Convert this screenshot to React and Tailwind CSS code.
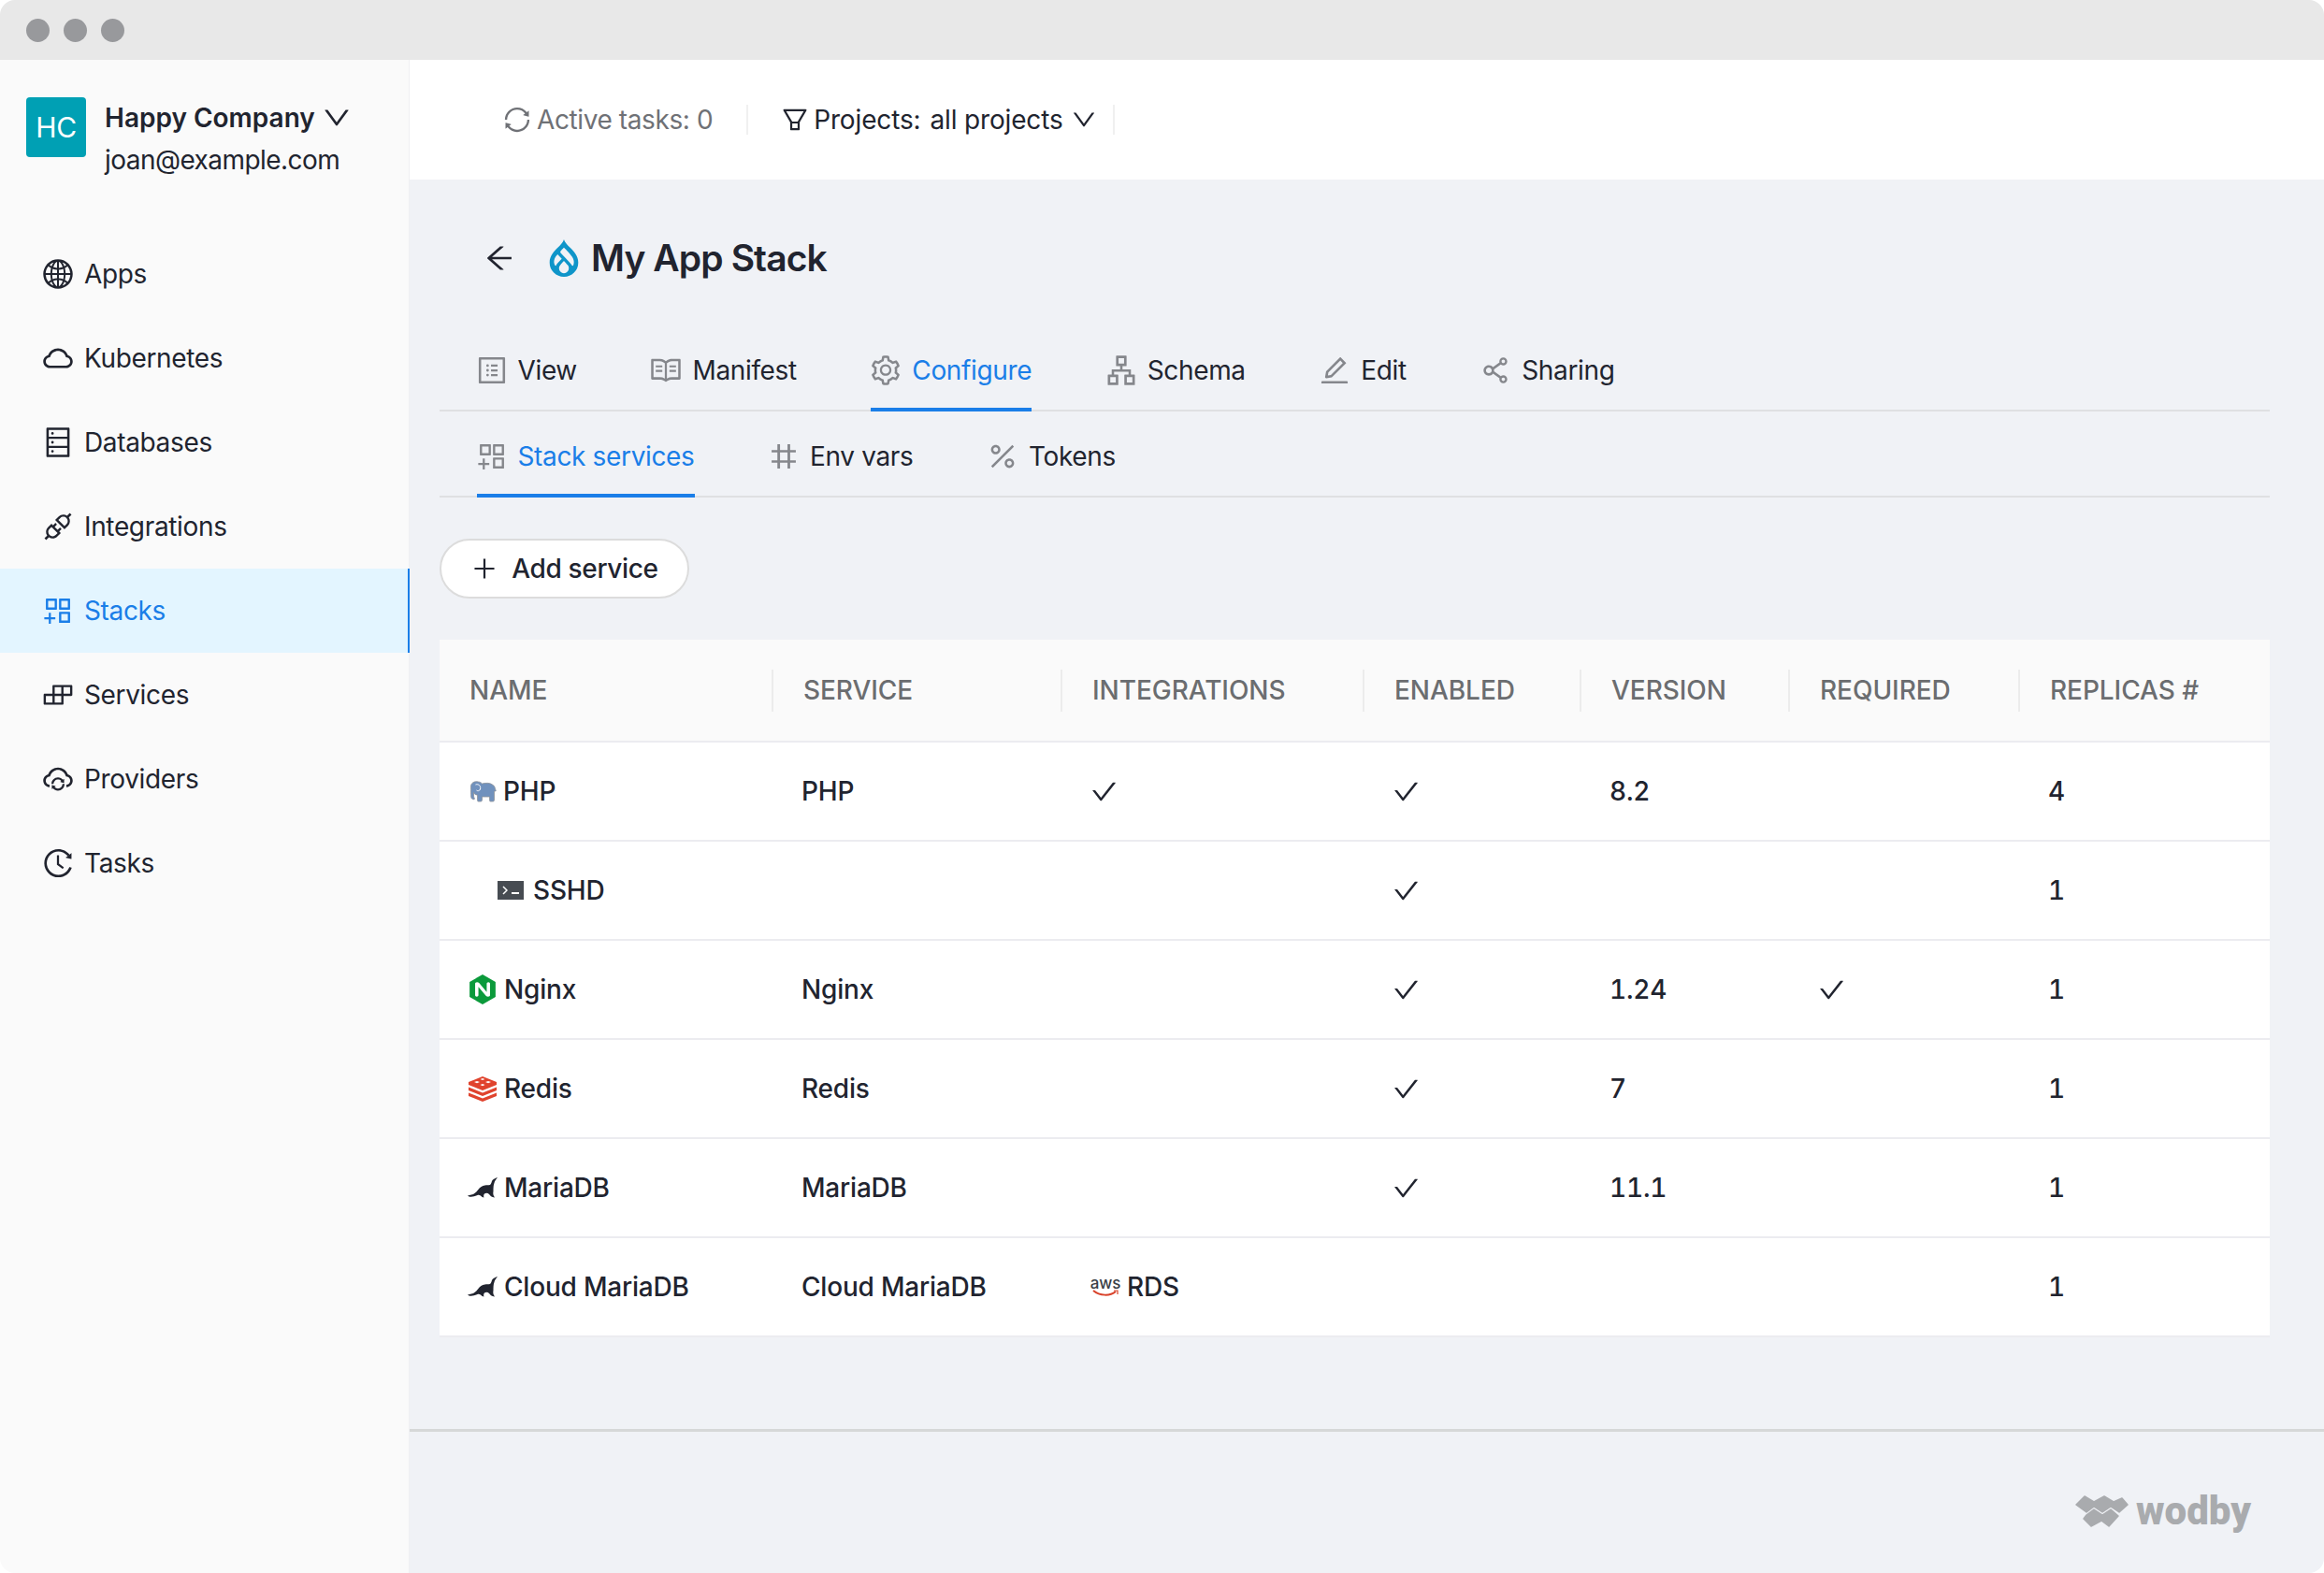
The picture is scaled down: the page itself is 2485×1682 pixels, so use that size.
import React from "react";
import {
  AiOutlineApartment,
  AiOutlineApi,
  AiOutlineAppstoreAdd,
  AiOutlineArrowLeft,
  AiOutlineBuild,
  AiOutlineCheck,
  AiOutlineCloud,
  AiOutlineCloudSync,
  AiOutlineDatabase,
  AiOutlineDown,
  AiOutlineEdit,
  AiOutlineFilter,
  AiOutlineGlobal,
  AiOutlineHistory,
  AiOutlineNumber,
  AiOutlinePercentage,
  AiOutlinePlus,
  AiOutlineProfile,
  AiOutlineRead,
  AiOutlineSetting,
  AiOutlineShareAlt,
  AiOutlineSync,
} from "react-icons/ai";
import { SiDrupal, SiNginx } from "react-icons/si";

const navItems = [
  { label: "Apps", icon: AiOutlineGlobal },
  { label: "Kubernetes", icon: AiOutlineCloud },
  { label: "Databases", icon: AiOutlineDatabase },
  { label: "Integrations", icon: AiOutlineApi },
  { label: "Stacks", icon: AiOutlineAppstoreAdd, active: true },
  { label: "Services", icon: AiOutlineBuild },
  { label: "Providers", icon: AiOutlineCloudSync },
  { label: "Tasks", icon: AiOutlineHistory },
];

const mainTabs = [
  { label: "View", icon: AiOutlineProfile },
  { label: "Manifest", icon: AiOutlineRead },
  { label: "Configure", icon: AiOutlineSetting, active: true },
  { label: "Schema", icon: AiOutlineApartment },
  { label: "Edit", icon: AiOutlineEdit },
  { label: "Sharing", icon: AiOutlineShareAlt },
];

const subTabs = [
  { label: "Stack services", icon: AiOutlineAppstoreAdd, active: true },
  { label: "Env vars", icon: AiOutlineNumber },
  { label: "Tokens", icon: AiOutlinePercentage },
];

const columns = ["Name", "Service", "Integrations", "Enabled", "Version", "Required", "Replicas #"];

const gridCols = "grid grid-cols-[357px_309px_323px_232px_223px_246px_267px]";

const TerminalIcon = () => (
  <div className="flex h-[20px] w-[28px] items-center gap-[4px] bg-[#474c52] pl-[5px]">
    <svg width="6" height="10" viewBox="0 0 6 10" fill="none" stroke="#fff" strokeWidth="1.5">
      <path d="M1 1l4 4-4 4" />
    </svg>
    <span className="mt-[5px] h-[2px] w-[8px] bg-white" />
  </div>
);

const ElephantIcon = () => (
  <svg width="31" height="23" viewBox="0 0 30 23" className="shrink-0">
    <path
      fill="#7091bd"
      stroke="#8f949b"
      strokeWidth="0.8"
      d="M3 6C3 2 7 0 11 1c2 0 3 1 4 2 3-1 9-1 11 1 2 1 3 3 3 5 1 1 1 2 0 2h-1v9c0 2-1 2-2 2h-2c-1 0-1-1-1-2v-3h-8v3c0 2-1 2-2 2h-2c-1 0-1-1-1-2v-5c-2 0-4-1-4-3v4c0 2 1 2 1 3s-2 1-3 0-1-3-1-13z"
    />
    <path d="M8 4c3-1 6 1 5 5-1 2-3 2-4 1" fill="none" stroke="#fff" strokeWidth="1" />
  </svg>
);

const RedisIcon = () => (
  <svg width="32" height="27" viewBox="0 0 32 27" className="shrink-0">
    <path fill="#e0432d" d="M16 0l15 6v3L16 15 1 9V6z" />
    <path fill="#e0432d" d="M1 11.5l15 6 15-6V15l-15 6-15-6z" />
    <path fill="#e0432d" d="M1 17.5l15 6 15-6V21l-15 6-15-6z" />
    <path fill="#fff" d="M16 2l2.500 1-2.500 1-2.500-1zM10 5l3 1-3 1.300-3-1.300zM22 5l3 1-3 1.300-3-1.300zM16 8l2.500 1-2.500 1.200-2.500-1.200z" />
  </svg>
);

const SealIcon = () => (
  <svg width="32" height="22" viewBox="0 0 32 22" fill="#21242f" className="shrink-0">
    <path d="M32 0c-2 .5-4 1.500-5.500 3-1 1.500-1 4-2.500 5-2 .5-3.500 0-5.500.5-3 .5-5.500 2-7.500 5-1.500 2-3 3.500-5 4.500-2 .5-4 1-6 1.500l1.500 1c3 .5 6 0 9-1.500 1.500-.5 2.500 0 4 1 .5.500 1.500 1.500 3 1.500-.5-1.500-.5-3 .5-4 1.500-1 3.500-1 5 .5 1 1.500 2.500 3 6 3.500-1.500-2-2-4-1.500-6.500 0-3 0-6.500 1-9 .500-2 1.500-3.500 3.500-6z" />
  </svg>
);

const AwsIcon = () => (
  <div className="flex w-[30px] flex-col items-center leading-none">
    <span className="text-[17px] leading-[14px] text-[#3a3f47]">aws</span>
    <svg width="30" height="9" viewBox="0 0 30 9" fill="none" stroke="#d9432b" strokeWidth="2">
      <path d="M2 1c7 6 18 6 24 1" />
      <path d="M24 1h4v4" strokeWidth="1.2" />
    </svg>
  </div>
);

function Check() {
  return <AiOutlineCheck size={31} className="-ml-[2px] text-[#21242f]" />;
}

const rows = [
  {
    icon: <ElephantIcon />,
    name: "PHP",
    service: "PHP",
    integrations: <Check />,
    enabled: true,
    version: "8.2",
    replicas: "4",
  },
  { icon: <TerminalIcon />, name: "SSHD", child: true, enabled: true, replicas: "1" },
  {
    icon: <SiNginx size={32} className="text-[#0b9a3b]" />,
    name: "Nginx",
    service: "Nginx",
    enabled: true,
    version: "1.24",
    required: true,
    replicas: "1",
  },
  {
    icon: <RedisIcon />,
    name: "Redis",
    service: "Redis",
    enabled: true,
    version: "7",
    replicas: "1",
  },
  {
    icon: <SealIcon />,
    name: "MariaDB",
    service: "MariaDB",
    enabled: true,
    version: "11.1",
    replicas: "1",
  },
  {
    icon: <SealIcon />,
    name: "Cloud MariaDB",
    service: "Cloud MariaDB",
    integrations: (
      <div className="flex items-center gap-[8px]">
        <AwsIcon />
        <span>RDS</span>
      </div>
    ),
    enabled: false,
    replicas: "1",
  },
];

const TabRow = ({ tabs }) => (
  <div className="flex h-[92px] gap-[79.5px] border-b-2 border-[#dfe0e2] pl-[39.500px]">
    {tabs.map((tab) => (
      <div
        key={tab.label}
        className={`-mb-[2px] flex h-[92px] items-center gap-[10px] border-b-4 pt-[8px] ${
          tab.active ? "border-[#1a7ee8]" : "border-transparent"
        }`}
      >
        <tab.icon size={36} className="-ml-[2px] text-[#85878c]" />
        <span className={tab.active ? "text-[#1a7ee8]" : "text-[#21242f]"}>{tab.label}</span>
      </div>
    ))}
  </div>
);

const WodbyMark = () => (
  <svg width="57" height="34" viewBox="0 0 57 34" fill="#a9abae" stroke="#a9abae" strokeWidth="1.5" strokeLinejoin="round">
    <path d="M1 10l9-9 10 6 11-6 10 6 9-4 6 7-9 8-9-6-9 6-9-6-8 6z" />
    <path d="M9 25l3-4 8-6 9 6 9-6 8 7-10 11-8-6-11 6z" />
  </svg>
);

export default function App() {
  return (
    <div className="flex h-[1682px] w-[2485px] flex-col overflow-hidden rounded-[16px] font-['Inter',sans-serif] text-[28px] tracking-[-0.35px] text-[#21242f]">
      {/* window chrome */}
      <div className="flex h-[64px] shrink-0 items-center gap-[15px] bg-[#e8e8e8] pl-[28px]">
        <span className="h-[25px] w-[25px] rounded-full bg-[#98999c]" />
        <span className="h-[25px] w-[25px] rounded-full bg-[#98999c]" />
        <span className="h-[25px] w-[25px] rounded-full bg-[#98999c]" />
      </div>

      <div className="flex flex-1">
        <aside className="w-[438px] shrink-0 border-r border-[#f0f0f2] bg-[#fafafa]">
          <div className="flex gap-[20px] pl-[28px] pt-[40px]">
            <div className="flex h-[64px] w-[64px] items-center justify-center rounded-[4px] bg-[#00a0b4] text-[30px] text-white">
              HC
            </div>
            <div className="-mt-[1px]">
              <div className="flex h-[46px] items-center gap-[6px] font-semibold tracking-normal">
                Happy Company
                <AiOutlineDown size={34} />
              </div>
              <div className="h-[44px] leading-[44px] tracking-[-0.55px]">joan@example.com</div>
            </div>
          </div>
          <nav className="mt-[55px]">
            {navItems.map((item) => (
              <div
                key={item.label}
                className={`flex h-[90px] items-center gap-[10px] pl-[44px] ${
                  item.active ? "-mr-px border-r-2 border-[#1a7ee8] bg-[#e3f5ff] text-[#1a7ee8]" : ""
                }`}
              >
                <item.icon size={36} />
                {item.label}
              </div>
            ))}
          </nav>
        </aside>

        <main className="flex min-w-0 flex-1 flex-col bg-[#f0f2f6]">
          <div className="flex h-[128px] shrink-0 items-center bg-white pl-[99px]">
            <div className="flex items-center gap-[5px] tracking-[-0.4px] text-[#6f7176]">
              <AiOutlineSync size={32} />
              Active tasks: 0
            </div>
            <span className="ml-[36px] h-[32px] w-[2px] bg-[#f0f0f0]" />
            <div className="ml-[34px] flex items-center gap-[4px] tracking-[-0.15px]">
              <AiOutlineFilter size={32} />
              <span className="flex gap-[10px]">
                <span>Projects:</span>
                <span>all projects</span>
              </span>
              <AiOutlineDown size={30} className="ml-[3px]" />
            </div>
            <span className="ml-[16px] h-[32px] w-[2px] bg-[#f0f0f0]" />
          </div>

          <div className="pl-[32px] pr-[58px]">
            <div className="mb-[48px] mt-[60px] flex h-[48px] items-center pl-[46px]">
              <AiOutlineArrowLeft size={36} />
              <SiDrupal size={40} className="ml-[31px] text-[#0f95c9]" />
              <h1 className="ml-[9px] text-[39px] font-semibold tracking-[-0.9px] text-[#21242f]">My App Stack</h1>
            </div>

            <TabRow tabs={mainTabs} />
            <TabRow tabs={subTabs} />

            <button className="mt-[44px] flex h-[64px] w-[267px] items-center justify-center gap-[14px] rounded-full border-2 border-[#dcdcdc] bg-white font-medium">
              <AiOutlinePlus size={30} />
              Add service
            </button>

            <div className="mt-[44px]">
              <div className={`${gridCols} h-[110px] items-center border-b-2 border-[#ececf0] bg-[#fafafa] tracking-[-0.05px] text-[#6b6d70]`}>
                {columns.map((col, i) => (
                  <div
                    key={col}
                    className={`flex h-[45px] items-center pl-[32px] font-medium uppercase ${
                      i < columns.length - 1 ? "border-r-2 border-[#ececec]" : ""
                    }`}
                  >
                    {col}
                  </div>
                ))}
              </div>
              {rows.map((row) => (
                <div
                  key={row.name}
                  className={`${gridCols} h-[106px] items-center border-b-2 border-[#ececf0] bg-white font-medium tracking-[-0.2px]`}
                >
                  <div className={`flex items-center ${row.child ? "gap-[10px] pl-[62px]" : "gap-[7px] pl-[30px]"}`}>
                    {row.icon}
                    {row.name}
                  </div>
                  <div className="pl-[30px]">{row.service}</div>
                  <div className="pl-[31px]">{row.integrations}</div>
                  <div className="pl-[31px]">{row.enabled && <Check />}</div>
                  <div className="pl-[30px] tabular-nums">{row.version}</div>
                  <div className="pl-[31px]">{row.required && <Check />}</div>
                  <div className="pl-[30px] tabular-nums">{row.replicas}</div>
                </div>
              ))}
            </div>
          </div>

          <div className="mt-[98px] h-[3px] bg-[#d6d8d8]" />
          <div className="flex items-center justify-end gap-[8px] pr-[78px] pt-[63px]">
            <WodbyMark />
            <span className="font-['Roboto',sans-serif] text-[42px] font-black leading-[44px] tracking-[0px] text-[#a9abae]">
              wodby
            </span>
          </div>
        </main>
      </div>
    </div>
  );
}
